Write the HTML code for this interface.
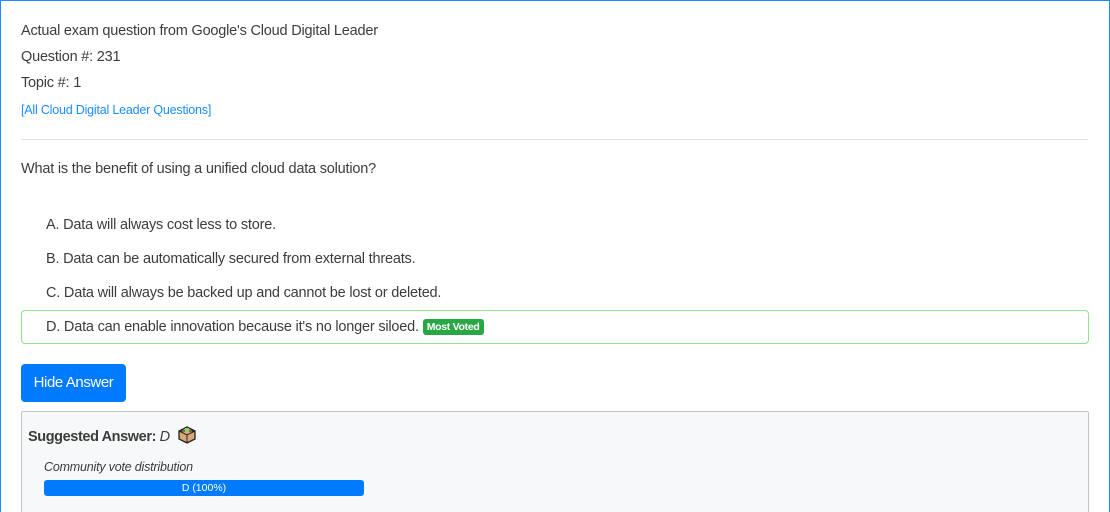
<!DOCTYPE html>
<html><head><meta charset="utf-8"><style>
html,body{margin:0;width:1110px;height:512px;overflow:hidden;}
body{background:#fff;font-family:"Liberation Sans",sans-serif;color:#3c3c3c;position:relative;}
.wrap{position:absolute;left:0;top:0;width:1108px;height:511px;border:1px solid #1a8cff;border-bottom:none;}
.t{position:absolute;left:21px;font-size:14.5px;letter-spacing:-0.2px;white-space:nowrap;}
.hr{position:absolute;left:21px;width:1067px;top:139px;border-top:1px solid #e2e2e2;}
.opt{position:absolute;left:46px;font-size:14.5px;letter-spacing:-0.2px;white-space:nowrap;}
.dbox{position:absolute;left:21px;top:310px;width:1066px;height:32px;border:1px solid #8fe08f;border-radius:4px;}
.badge{display:inline-block;background:#28a745;color:#fff;font-size:10.5px;font-weight:bold;padding:2px 4px;border-radius:3px;letter-spacing:-0.3px;vertical-align:1px;}
.btn{position:absolute;left:21px;top:364px;width:105px;height:38px;background:#007bff;border-radius:4px;color:#fff;font-size:15px;line-height:38px;text-align:center;letter-spacing:-0.4px;}
.sug{position:absolute;left:21px;top:411px;width:1066px;height:100px;background:#f7f8fa;border:1px solid #c4c4c4;border-bottom:none;border-radius:2px 2px 0 0;}
.bar{position:absolute;left:44px;top:480px;width:320px;height:16px;background:#007bff;border-radius:3px;color:#fff;font-size:10.5px;text-align:center;line-height:16px;}
</style></head><body>
<div class="wrap"></div>
<div class="t" style="top:23px">Actual exam question from Google's Cloud Digital Leader</div>
<div class="t" style="top:49px">Question #: 231</div>
<div class="t" style="top:75px">Topic #: 1</div>
<div class="t" style="top:103px;font-size:12.5px;color:#1a8cff;letter-spacing:-0.2px">[All Cloud Digital Leader Questions]</div>
<div class="hr"></div>
<div class="t" style="top:161px">What is the benefit of using a unified cloud data solution?</div>
<div class="opt" style="top:217px">A. Data will always cost less to store.</div>
<div class="opt" style="top:251px">B. Data can be automatically secured from external threats.</div>
<div class="opt" style="top:285px">C. Data will always be backed up and cannot be lost or deleted.</div>
<div class="dbox"></div>
<div class="opt" style="top:319px">D. Data can enable innovation because it's no longer siloed. <span class="badge">Most Voted</span></div>
<div class="btn">Hide Answer</div>
<div class="sug"></div>
<div class="t" style="left:28px;top:425px;font-weight:bold;letter-spacing:-0.4px">Suggested Answer: <i style="font-weight:normal">D</i>
<svg width="20" height="20" viewBox="0 0 20 20" style="vertical-align:-4px;margin-left:4px"><polygon points="10,2 18,6 18,14 10,18 2,14 2,6" fill="#d9a878" stroke="#222" stroke-width="1.3"/><polygon points="2,6 10,10 18,6" fill="none" stroke="#222" stroke-width="1"/><line x1="10" y1="10" x2="10" y2="18" stroke="#222"/><rect x="8" y="3" width="4" height="4" fill="#8bd36a"/></svg></div>
<div class="t" style="left:44px;top:460px;font-size:12.5px;font-style:italic;">Community vote distribution</div>
<div class="bar">D (100%)</div>
</body></html>
